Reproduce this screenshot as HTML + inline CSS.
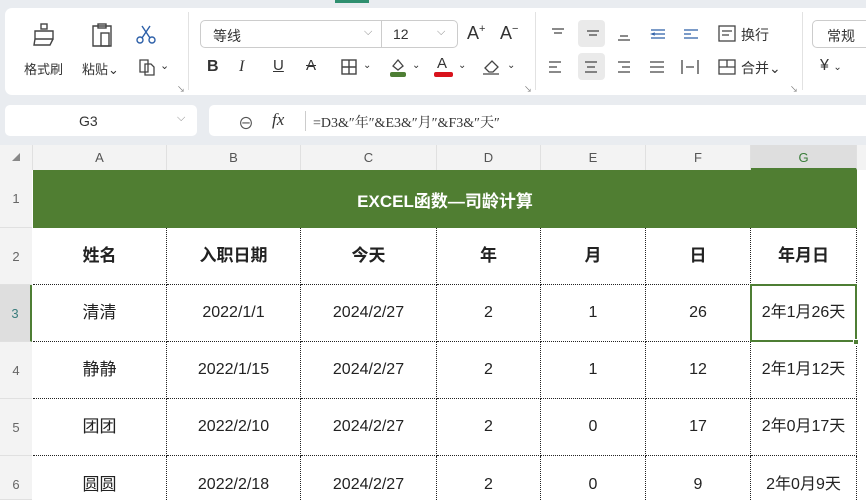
<!DOCTYPE html>
<html><head><meta charset="utf-8"><style>
*{margin:0;padding:0;box-sizing:border-box}
html,body{width:866px;height:500px;overflow:hidden}
body{background:#e9ecf0;font-family:"Liberation Sans","Noto Sans CJK SC",sans-serif;position:relative;color:#222}
.a{position:absolute}
.panel{background:#fff;border-radius:7px}
.t{font-size:13px;color:#333;white-space:nowrap}
.sep{position:absolute;width:1px;background:#e2e2e2}
.ch{position:absolute;top:145px;height:25px;background:#f3f3f3;font-size:13px;color:#555;text-align:center;line-height:25px;border-right:1px solid #e0e0e0}
.rh{position:absolute;left:0;width:32px;background:#f3f3f3;font-size:13px;color:#666;text-align:center;border-bottom:1px solid #e0e0e0}
.c{position:absolute;background:#fff;border-right:1px dotted #222;border-bottom:1px dotted #222;text-align:center;font-size:16px;line-height:20px;color:#222;display:flex;align-items:center;justify-content:center}
.b{font-weight:bold;font-size:17px}
</style></head><body>
<div class="a" style="left:335px;top:0;width:34px;height:3px;background:#2f8f6f"></div>
<div class="a panel" style="left:5px;top:8px;width:870px;height:87px"></div>
<div class="sep" style="left:188px;top:12px;height:78px"></div>
<div class="sep" style="left:535px;top:12px;height:78px"></div>
<div class="sep" style="left:802px;top:12px;height:78px"></div>
<svg class="a" style="left:30px;top:22px" width="28" height="26" viewBox="0 0 28 26" fill="none" stroke="#444" stroke-width="1.4"><rect x="11" y="2" width="6" height="5"/><path d="M5 9h18v8H5z M5 17l-1 6h16l3-6"/></svg>
<svg class="a" style="left:88px;top:22px" width="28" height="26" viewBox="0 0 28 26" fill="none" stroke="#444" stroke-width="1.4"><path d="M5 4h18v20H5z"/><rect x="10" y="2" width="8" height="4"/><rect x="13" y="11" width="8" height="13"/></svg>
<svg class="a" style="left:134px;top:24px" width="24" height="20" viewBox="0 0 24 20" fill="none" stroke="#2c5fa8" stroke-width="1.4"><path d="M8 2l8 12M16 2l-8 12"/><circle cx="6" cy="16" r="3"/><circle cx="18" cy="16" r="3"/></svg>
<div class="a t" style="left:24px;top:59px">格式刷</div>
<div class="a t" style="left:82px;top:59px">粘贴⌄</div>
<svg class="a" style="left:137px;top:57px" width="20" height="20" viewBox="0 0 20 20" fill="none" stroke="#444" stroke-width="1.3"><path d="M3 3h8v12H3z"/><path d="M8 7h6l3 3v8H8z"/></svg>
<div class="a t" style="left:160px;top:59px;font-size:11px">⌄</div>
<div class="a" style="left:177px;top:84px;font-size:8px;color:#777">↘</div>
<div class="a" style="left:200px;top:20px;width:258px;height:28px;border:1px solid #ccc;border-radius:5px"></div>
<div class="sep" style="left:381px;top:21px;height:26px;background:#ccc"></div>
<div class="a t" style="left:213px;top:26px;font-size:14px">等线</div>
<div class="a t" style="left:364px;top:26px;color:#888;font-size:11px">⌵</div>
<div class="a t" style="left:393px;top:26px;font-size:14px">12</div>
<div class="a t" style="left:437px;top:26px;color:#888;font-size:11px">⌵</div>
<div class="a t" style="left:467px;top:23px;font-size:18px">A<sup style="font-size:11px">+</sup></div>
<div class="a t" style="left:500px;top:23px;font-size:18px">A<sup style="font-size:11px">−</sup></div>
<div class="a t" style="left:207px;top:58px;font-size:16px;font-weight:bold">B</div>
<div class="a t" style="left:239px;top:58px;font-size:16px;font-style:italic;font-family:'Liberation Serif',serif">I</div>
<div class="a t" style="left:273px;top:57px;font-size:15px;text-decoration:underline">U</div>
<div class="a t" style="left:306px;top:57px;font-size:15px;text-decoration:line-through">A</div>
<svg class="a" style="left:340px;top:58px" width="18" height="18" viewBox="0 0 18 18" fill="none" stroke="#444" stroke-width="1.4"><rect x="2" y="2" width="14" height="14"/><path d="M9 2v14M2 9h14"/></svg>
<div class="a t" style="left:363px;top:60px;font-size:10px">⌄</div>
<svg class="a" style="left:387px;top:56px" width="22" height="22"><path d="M6 10l5-6 5 6-5 4z" fill="none" stroke="#444" stroke-width="1.3"/><rect x="3" y="16" width="16" height="5" rx="2" fill="#4e7e34"/></svg>
<div class="a t" style="left:412px;top:60px;font-size:10px">⌄</div>
<div class="a t" style="left:437px;top:55px;font-size:15px">A</div>
<div class="a" style="left:434px;top:72px;width:19px;height:5px;border-radius:2px;background:#d8131c"></div>
<div class="a t" style="left:458px;top:60px;font-size:10px">⌄</div>
<svg class="a" style="left:481px;top:57px" width="22" height="20" viewBox="0 0 22 20" fill="none" stroke="#444" stroke-width="1.3"><path d="M4 11l7-7 6 6-5 5H8z M2 17h16"/></svg>
<div class="a t" style="left:507px;top:60px;font-size:10px">⌄</div>
<div class="a" style="left:524px;top:84px;font-size:8px;color:#777">↘</div>
<div class="a" style="left:578px;top:20px;width:27px;height:27px;background:#eaeaea;border-radius:4px"></div>
<div class="a" style="left:578px;top:53px;width:27px;height:27px;background:#eaeaea;border-radius:4px"></div>
<svg class="a" style="left:545px;top:22px" width="250" height="60" fill="none" stroke="#444" stroke-width="1.3">
<path d="M7 7h12M9 11h8"/><path d="M42 9h12M44 13h8"/><path d="M73 18h12M75 14h8"/>
<path d="M106 8h14M110 12h10M106 16h14M110 11l-3 1 3 1" stroke="#2c5fa8"/>
<path d="M139 8h14M139 12h6M139 16h14M142 12h4" stroke="#2c5fa8"/>
<path d="M4 40h12M4 45h8M4 50h12"/><path d="M40 40h12M42 45h8M40 50h12"/><path d="M73 40h12M77 45h8M73 50h12"/><path d="M105 40h14M105 45h14M105 50h14"/>
<path d="M137 38v14M153 38v14M141 45h8"/>
<rect x="174" y="4" width="16" height="15"/><path d="M177 9h10M177 13h7"/>
<rect x="174" y="38" width="16" height="14"/><path d="M174 45h16M182 38v7"/>
</svg>
<div class="a t" style="left:741px;top:25px;font-size:14px">换行</div>
<div class="a t" style="left:741px;top:58px;font-size:14px">合并⌄</div>
<div class="a" style="left:790px;top:84px;font-size:8px;color:#777">↘</div>
<div class="a" style="left:812px;top:20px;width:70px;height:28px;border:1px solid #ccc;border-radius:5px"></div>
<div class="a t" style="left:827px;top:26px;font-size:14px">常规</div>
<div class="a t" style="left:820px;top:57px;font-size:16px">¥ <span style="font-size:10px">⌄</span></div>
<div class="a panel" style="left:5px;top:105px;width:192px;height:31px;border-radius:5px"></div>
<div class="a t" style="left:79px;top:113px;font-size:14px">G3</div>
<div class="a t" style="left:177px;top:112px;font-size:11px;color:#888">⌵</div>
<div class="a panel" style="left:209px;top:105px;width:670px;height:31px;border-radius:5px"></div>
<div class="a t" style="left:238px;top:110px;font-size:16px;color:#555">⊖</div>
<div class="a t" style="left:272px;top:110px;font-size:17px;font-style:italic;font-family:'Liberation Serif',serif">fx</div>
<div class="sep" style="left:305px;top:111px;height:20px;background:#ccc"></div>
<div class="a t" style="left:313px;top:112px;font-size:14px;font-family:'Liberation Serif','Noto Serif CJK SC',serif">=D3&amp;″年″&amp;E3&amp;″月″&amp;F3&amp;″天″</div>
<div class="a" style="left:0;top:145px;width:866px;height:355px;background:#fff"></div>
<div class="ch" style="left:0;width:33px;font-size:8px;color:#888">◢</div>
<div class="ch" style="left:33px;width:134px">A</div>
<div class="ch" style="left:167px;width:134px">B</div>
<div class="ch" style="left:301px;width:136px">C</div>
<div class="ch" style="left:437px;width:104px">D</div>
<div class="ch" style="left:541px;width:105px">E</div>
<div class="ch" style="left:646px;width:105px">F</div>
<div class="ch" style="left:751px;width:106px;background:#dedede;color:#3a7d3a;border-bottom:2px solid #4e7e34">G</div>
<div class="ch" style="left:857px;width:20px"></div>
<div class="rh" style="top:170px;height:58px;line-height:58px">1</div>
<div class="rh" style="top:228px;height:57px;line-height:57px">2</div>
<div class="rh" style="top:285px;height:57px;line-height:57px;background:#dedede;color:#3a7d7d;border-right:2px solid #4e7e34">3</div>
<div class="rh" style="top:342px;height:57px;line-height:57px">4</div>
<div class="rh" style="top:399px;height:57px;line-height:57px">5</div>
<div class="rh" style="top:456px;height:44px;line-height:57px">6</div>
<div class="a" style="left:33px;top:170px;width:824px;height:58px;background:#507e32;color:#fff;font-weight:bold;font-size:17px;display:flex;align-items:center;justify-content:center">EXCEL函数—司龄计算</div>
<div id="g"></div>
<script>
var L=[33,167,301,437,541,646,751,857],T=[228,285,342,399,456,513];
var d=[["姓名","入职日期","今天","年","月","日","年月日"],["清清","2022/1/1","2024/2/27","2","1","26","2年1月26天"],["静静","2022/1/15","2024/2/27","2","1","12","2年1月12天"],["团团","2022/2/10","2024/2/27","2","0","17","2年0月17天"],["圆圆","2022/2/18","2024/2/27","2","0","9","2年0月9天"]];
var h="";for(var r=0;r<5;r++)for(var c=0;c<7;c++){var ht=(r==4?44:T[r+1]-T[r]);h+='<div class="c'+(r==0?' b':'')+'" style="left:'+L[c]+'px;top:'+T[r]+'px;width:'+(L[c+1]-L[c])+'px;height:'+ht+'px;'+(r==4?'align-items:flex-start;padding-top:19px;border-bottom:none;':'')+(c==0&&r>0?'font-size:17px;':'')+'"><span>'+d[r][c]+'</span></div>';}
document.getElementById("g").innerHTML=h;
</script>
<div class="a" style="left:750px;top:284px;width:107px;height:58px;border:2px solid #4e7e34"></div>
<div class="a" style="left:853px;top:339px;width:6px;height:6px;background:#4e7e34;border:1px solid #fff"></div>
</body></html>
